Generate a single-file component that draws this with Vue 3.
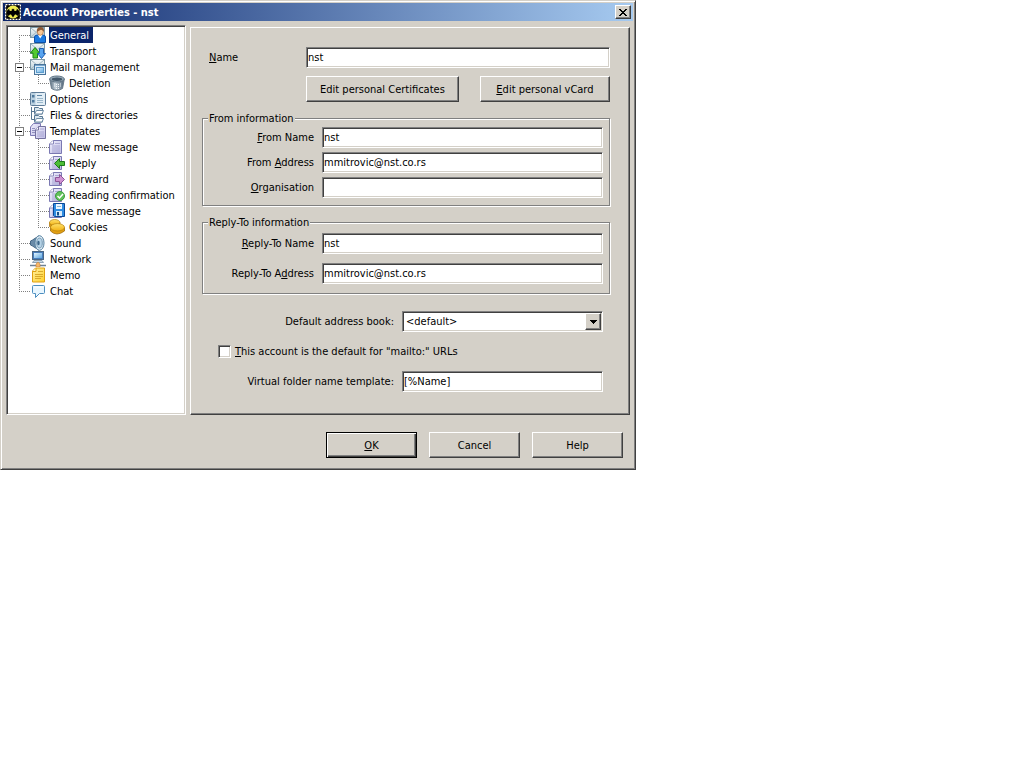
<script setup>
import { ref } from 'vue'

const rows = [
  { label: 'General', icon: 'general', level: 1, first: true },
  { label: 'Transport', icon: 'transport', level: 1 },
  { label: 'Mail management', icon: 'mail', level: 1, open: true },
  { label: 'Deletion', icon: 'bin', level: 2, last: true },
  { label: 'Options', icon: 'options', level: 1 },
  { label: 'Files & directories', icon: 'files', level: 1 },
  { label: 'Templates', icon: 'templates', level: 1, open: true },
  { label: 'New message', icon: 'new', level: 2 },
  { label: 'Reply', icon: 'reply', level: 2 },
  { label: 'Forward', icon: 'forward', level: 2 },
  { label: 'Reading confirmation', icon: 'confirm', level: 2 },
  { label: 'Save message', icon: 'save', level: 2 },
  { label: 'Cookies', icon: 'cookies', level: 2, last: true },
  { label: 'Sound', icon: 'sound', level: 1 },
  { label: 'Network', icon: 'network', level: 1 },
  { label: 'Memo', icon: 'memo', level: 1 },
  { label: 'Chat', icon: 'chat', level: 1, last: true },
]
const selected = ref('General')
const name = ref('nst')
const fromName = ref('nst')
const fromAddress = ref('mmitrovic@nst.co.rs')
const organisation = ref('')
const replyName = ref('nst')
const replyAddress = ref('mmitrovic@nst.co.rs')
const book = ref('default')
const isDefault = ref(false)
const template = ref('[%Name]')
</script>

<template>
  <div class="dialog" role="dialog" aria-labelledby="dlg-title">
    <svg class="defs" width="0" height="0" aria-hidden="true">
      <defs>
        <linearGradient id="blue" x1="0" y1="0" x2="1" y2="1"><stop offset="0" stop-color="#e4f5ff" /><stop offset="1" stop-color="#5fa8e0" /></linearGradient>
        <linearGradient id="paper" x1="0" y1="0" x2="0" y2="1"><stop offset="0" stop-color="#f4f9fa" /><stop offset="1" stop-color="#bcd0d8" /></linearGradient>
        <linearGradient id="lilac" x1="0" y1="0" x2="1" y2="1"><stop offset="0" stop-color="#f2f1fd" /><stop offset="1" stop-color="#bfbce6" /></linearGradient>
        <linearGradient id="steel" x1="0" y1="0" x2="1" y2="0"><stop offset="0" stop-color="#566b7d" /><stop offset=".4" stop-color="#c3d0d9" /><stop offset="1" stop-color="#4b6074" /></linearGradient>
        <linearGradient id="gold" x1="0" y1="0" x2="0" y2="1"><stop offset="0" stop-color="#ffe26a" /><stop offset="1" stop-color="#f2b112" /></linearGradient>
        <linearGradient id="note" x1="0" y1="0" x2="1" y2="1"><stop offset="0" stop-color="#fff0a0" /><stop offset="1" stop-color="#ffd02c" /></linearGradient>
        <symbol id="envelope" viewBox="0 0 16 16">
          <rect x=".5" y=".5" width="14" height="10" fill="url(#paper)" stroke="#7d99a7" />
          <path d="M1 1l6.500 5.500L14 1M1 10l5-4.500M14 10L9 5.500" fill="none" stroke="#9fb6c1" />
        </symbol>
        <symbol id="page" viewBox="0 0 16 16">
          <path d="M4 1.500h8.500v13h-12V5z" fill="url(#lilac)" stroke="#7a78b2" />
          <path d="M4.500 1.500v3.500h-4" fill="#fff" stroke="#8a88bc" />
          <path d="M6 4.500h5M3 7h8M3 9h8M3 11h8M3 13h8" stroke="#9f9dcb" stroke-width=".8" />
        </symbol>
        <symbol id="general" viewBox="0 0 16 16">
          <use href="#envelope" />
          <path d="M4.500 15.500V10q0-2 3-2h5q3 0 3 2v5.500z" fill="#1b7ae2" stroke="#0d4ea6" />
          <path d="M8 8l2.200 3.500L12.500 8z" fill="#fff" />
          <ellipse cx="10.300" cy="4.700" rx="3" ry="3.600" fill="#f9c896" stroke="#a8703f" stroke-width=".7" />
          <path d="M6.800 5Q6.500 0 10.500 0t3.500 5q-1-2-3-2.200Q9 3.500 6.800 5z" fill="#8c5a38" />
        </symbol>
        <symbol id="transport" viewBox="0 0 16 16">
          <use href="#envelope" />
          <path d="M5 4.500l4.500 5.500H7.500v5h-4.500v-5H.5z" fill="#52c932" stroke="#1b8512" />
          <path d="M11.500 15.500L7.500 10.500h2v-5h4v5h2z" fill="#58a4f0" stroke="#1f60b4" />
        </symbol>
        <symbol id="mail" viewBox="0 0 16 16">
          <use href="#envelope" />
          <rect x="4.500" y="5.500" width="11" height="10" fill="#d9edfb" stroke="#4a749a" />
          <path d="M5 6.500h10" stroke="#79a7cd" />
          <rect x="6.500" y="8.500" width="7" height="5" fill="url(#blue)" stroke="#5d9ccc" />
        </symbol>
        <symbol id="bin" viewBox="0 0 16 16">
          <path d="M.7 4L2.500 13.500q5.500 3.500 11 0L15.300 4z" fill="url(#steel)" stroke="#697b8a" />
          <ellipse cx="8" cy="4" rx="7.300" ry="3" fill="#9aacb9" stroke="#5f7485" />
          <ellipse cx="8" cy="4.200" rx="5.300" ry="1.700" fill="#43586a" />
          <path d="M5 9h1M7 9.500h1M9 9.500h1M11 9h1M5 11h1M7 11.500h1M9 11.500h1M11 11h1M7 13.500h1M9 13.500h1" stroke="#f3f7f9" />
        </symbol>
        <symbol id="options" viewBox="0 0 16 16">
          <rect x=".5" y="1.500" width="15" height="13" rx="1" fill="#e1edf5" stroke="#5e7c98" />
          <path d="M1 2h4.500v12H1z" fill="#b8cfdf" />
          <rect x="2" y="4" width="2.500" height="2.500" fill="#4d789c" /><rect x="2" y="9" width="2.500" height="2.500" fill="#4d789c" />
          <path d="M7 4.500h5" stroke="#5f86a6" /><path d="M7 7.500h6M7 9.500h6M7 11.500h6" stroke="#9bb8cc" />
        </symbol>
        <symbol id="files" viewBox="0 0 16 16">
          <path d="M1.500 0v12.500h3M1.500 4.500h3" fill="none" stroke="#577792" />
          <path d="M4.500.5h4l1 1h3v5.500h-8zM4.500 8.500h4l1 1h3v5.500h-8z" fill="#dce8f0" stroke="#577792" />
          <path d="M4.500 7l2-3.500h7L12 7zM4.500 15l2-3.500h7L12 15z" fill="#fff" stroke="#6d8ba4" />
        </symbol>
        <symbol id="templates" viewBox="0 0 16 16">
          <path d="M3.500.5h7v12H.5V4z" fill="url(#lilac)" stroke="#7c79b4" />
          <path d="M2 5.500h3M2 7.500h3M2 9.500h3" stroke="#9290be" />
          <path d="M8.500 3.500h7v12h-10V7z" fill="url(#lilac)" stroke="#75729f" />
          <path d="M8.500 3.500V7h-3" fill="#fff" stroke="#75729f" />
          <path d="M10 6h4M7 9h7M7 11h7M7 13h7" stroke="#9c9ac9" stroke-width=".8" />
        </symbol>
        <symbol id="new" viewBox="0 0 16 16"><use href="#page" /></symbol>
        <symbol id="reply" viewBox="0 0 16 16"><use href="#page" /><path d="M5.500 8.500l5-5V6.500h5v4h-5v3z" fill="#4dbd38" stroke="#1c7a1a" /></symbol>
        <symbol id="forward" viewBox="0 0 16 16"><use href="#page" /><path d="M15.500 8.500l-5-5V6.500h-4v4h4v3z" fill="#cf92d2" stroke="#8d5698" /></symbol>
        <symbol id="confirm" viewBox="0 0 16 16"><use href="#page" /><circle cx="11" cy="9" r="4.500" fill="#62c25a" stroke="#3c9a40" /><path d="M8.500 9l2 2L14 7" fill="none" stroke="#fff" stroke-width="1.500" /></symbol>
        <symbol id="save" viewBox="0 0 16 16"><use href="#page" /><path d="M4.500.5h11v13H5.500l-1-1z" fill="#2f8de2" stroke="#0b4796" /><path d="M7 1h6v5H7z" fill="#eef7ff" /><path d="M7 8h6v5H7z" fill="#d8eaf8" /><path d="M8 9h2v3.500H8z" fill="#174e88" /><path d="M8 3.500h4" stroke="#8bb6d5" /></symbol>
        <symbol id="cookies" viewBox="0 0 16 16">
          <path d="M.5 3.500v4q2 3 6 2l4.500-3v-3z" fill="#d99a10" stroke="#a87010" stroke-width=".7" /><ellipse cx="5.700" cy="3.500" rx="5.200" ry="3" fill="url(#gold)" stroke="#b5800f" stroke-width=".7" />
          <path d="M1.500 8.500v3.500q6 6 14 0V8.500z" fill="#e3a011" stroke="#a06c0c" stroke-width=".8" /><ellipse cx="8.500" cy="8.300" rx="7" ry="3.700" fill="url(#gold)" stroke="#b5800f" stroke-width=".7" />
        </symbol>
        <symbol id="sound" viewBox="0 0 16 16">
          <path d="M.5 6l2-1L9 .8v14.400L2.500 11l-2-1z" fill="#6a8ba8" stroke="#466886" />
          <ellipse cx="9.500" cy="8" rx="4.500" ry="7.300" fill="#e6f2fa" stroke="#55809f" /><ellipse cx="9.500" cy="8" rx="2.800" ry="5" fill="#b5d2e6" stroke="#7599b4" /><ellipse cx="8.500" cy="8" rx="1.200" ry="2.300" fill="#3c6689" />
        </symbol>
        <symbol id="network" viewBox="0 0 16 16">
          <rect x="2.500" y=".5" width="11" height="8" fill="#4a7fbe" stroke="#4b6784" /><rect x="4" y="2" width="8" height="5" fill="url(#blue)" />
          <path d="M4 9.500h8l1.500 2h-11z" fill="#c9d7e2" stroke="#7890a6" stroke-width=".8" /><path d="M0 14.500h16" stroke="#6d8195" stroke-width="1.500" /><path d="M8 11l2 2v3H6v-3z" fill="#f5b76c" stroke="#c98238" stroke-width=".6" />
        </symbol>
        <symbol id="memo" viewBox="0 0 16 16"><path d="M5.500 1h9v14h-12V4z" fill="url(#note)" stroke="#dfa010" /><path d="M6 1v3.500H2.500" fill="#fff8cc" stroke="#dfa010" /><path d="M8 4.500h5M5 7.500h8M5 9.500h8M5 11.500h6" stroke="#d9aa2c" /></symbol>
        <symbol id="chat" viewBox="0 0 16 16"><path d="M3.500 2.500h10q1 0 1 1v6q0 1-1 1H9.500l-4 4v-4h-2q-1 0-1-1v-6q0-1 1-1z" fill="#e8f6ff" stroke="#4c8ec0" /><path d="M4 4h9.500" stroke="#fff" /></symbol>
      </defs>
    </svg>

    <header class="titlebar">
      <svg class="app-icon" viewBox="0 0 16 16" aria-hidden="true">
        <rect width="16" height="16" fill="#000" /><rect x=".5" y=".5" width="15" height="15" fill="none" stroke="#fff" stroke-width="1.400" stroke-dasharray="2 1" />
        <ellipse cx="8" cy="8" rx="6.500" ry="6.500" fill="#f0ec50" />
        <path d="M4.500 4.500Q2 5.500 1.500 8T4 12q0-2 2-1.500l2 3 2-3q2-.5 2 1.500 3-1.500 2.500-4t-3-3.500q1 2-1.500 2.500L9.500 7 9 4.500l-1 1-1-1L6.500 7 6 7Q3.500 6.500 4.500 4.500z" fill="#000" />
      </svg>
      <h1 id="dlg-title">Account Properties - nst</h1>
      <button class="close" type="button" aria-label="Close">
        <svg viewBox="0 0 8 7" width="8" height="7" shape-rendering="crispEdges" aria-hidden="true"><path d="M0 0h2v1h1v1h2V1h1V0h2v1H7v1H6v1H5v1h1v1h1v1h1v1H6V6H5V5H3v1H2v1H0V6h1V5h1V4h1V3H2V2H1V1H0z" /></svg>
      </button>
    </header>

    <form @submit.prevent>
      <div class="body">
        <ul class="tree" role="tree" aria-label="Account settings">
          <li v-for="row in rows" :key="row.label" role="treeitem" :aria-selected="selected === row.label" :class="['row', { first: row.first, last: row.last, child: row.level === 2 }]" @click="selected = row.label">
            <span class="guide root"><span v-if="row.open" class="expander"></span></span>
            <span v-if="row.level === 2" class="guide branch"></span>
            <svg class="icon" aria-hidden="true"><use :href="'#' + row.icon" /></svg>
            <span :class="['label', { selected: selected === row.label }]">{{ row.label }}</span>
          </li>
        </ul>

        <section class="panel">
          <div class="field name">
            <label for="name"><u>N</u>ame</label>
            <input id="name" v-model="name" type="text" />
          </div>
          <div class="actions">
            <button type="button" class="push certs">Edit personal Certificates</button>
            <button type="button" class="push vcard"><u>E</u>dit personal vCard</button>
          </div>

          <fieldset>
            <legend>From information</legend>
            <div class="field"><label for="fn"><u>F</u>rom Name</label><input id="fn" v-model="fromName" type="text" /></div>
            <div class="field"><label for="fa">From <u>A</u>ddress</label><input id="fa" v-model="fromAddress" type="text" /></div>
            <div class="field"><label for="org"><u>O</u>rganisation</label><input id="org" v-model="organisation" type="text" /></div>
          </fieldset>

          <fieldset class="reply">
            <legend>Reply-To information</legend>
            <div class="field"><label for="rn"><u>R</u>eply-To Name</label><input id="rn" v-model="replyName" type="text" /></div>
            <div class="field"><label for="ra">Reply-To A<u>d</u>dress</label><input id="ra" v-model="replyAddress" type="text" /></div>
          </fieldset>

          <div class="field wide book">
            <label for="book">Default address book:</label>
            <div class="combo">
              <select id="book" v-model="book"><option value="default">&lt;default&gt;</option></select>
              <span class="drop" aria-hidden="true"><svg viewBox="0 0 7 4" width="7" height="4" shape-rendering="crispEdges"><path d="M0 0h7v1H6v1H5v1H4v1H3V3H2V2H1V1H0z" /></svg></span>
            </div>
          </div>
          <div class="check">
            <input id="mailto" v-model="isDefault" type="checkbox" />
            <label for="mailto"><u>T</u>his account is the default for "mailto:" URLs</label>
          </div>
          <div class="field wide">
            <label for="tpl">Virtual folder name template:</label>
            <input id="tpl" v-model="template" type="text" />
          </div>
        </section>
      </div>

      <footer class="footer">
        <button type="submit" class="push default"><u>O</u>K</button>
        <button type="button" class="push">Cancel</button>
        <button type="button" class="push">Help</button>
      </footer>
    </form>
  </div>
</template>

<style>
body { background: #fff; }
</style>

<style scoped>
.dialog, .dialog * { box-sizing: border-box; }
.dialog {
  width: 100%;
  max-width: 636px;
  padding: 2px;
  border: 1px solid;
  border-color: #d4d0c8 #404040 #404040 #d4d0c8;
  box-shadow: inset 1px 1px #fff, inset -1px -1px #808080;
  background: #d4d0c8;
  color: #000;
  font: 11px/13px Tahoma, "DejaVu Sans Condensed", "DejaVu Sans", sans-serif;
  white-space: nowrap;
}
.defs { position: absolute; }
input, select, button { margin: 0; font: inherit; color: inherit; border-radius: 0; }
u { text-underline-offset: 1px; text-decoration-thickness: 1px; }

.titlebar {
  display: flex;
  align-items: center;
  height: 18px;
  padding: 0 2px;
  background: linear-gradient(to right, #0a246a, #a6caf0);
}
.app-icon { width: 16px; height: 16px; }
.titlebar h1 { flex: 1; margin: 0 0 0 2px; font-size: 11px; line-height: 13px; font-weight: bold; color: #fff; }
.close {
  display: flex;
  align-items: center;
  justify-content: center;
  width: 16px;
  height: 14px;
  padding: 0;
  border: 1px solid;
  border-color: #fff #404040 #404040 #fff;
  box-shadow: inset -1px -1px #808080;
  background: #d4d0c8;
}

.body { display: flex; gap: 4px; padding: 4px 3px 0; }
.tree {
  flex: 0 0 180px;
  margin: 0;
  padding: 1px;
  list-style: none;
  background: #fff;
  border: 1px solid;
  border-color: #808080 #fff #fff #808080;
  box-shadow: inset 1px 1px #404040, inset -1px -1px #d4d0c8;
}
.row { display: flex; height: 16px; cursor: default; }
.guide {
  --v: repeating-linear-gradient(to bottom, #808080 0 1px, transparent 1px 2px);
  --h: repeating-linear-gradient(to right, #808080 0 1px, transparent 1px 2px);
  display: flex;
  align-items: center;
  flex: none;
  background-repeat: no-repeat;
}
.root { width: 22px; background-image: var(--v), var(--h); background-position: 11px 0, 11px 8px; background-size: 1px 16px, 11px 1px; }
.first .root { background-position: 11px 8px, 11px 8px; }
.last .root { background-size: 1px 9px, 11px 1px; }
.child .root { background-size: 1px 16px, 0 0; }
.branch { width: 19px; background-image: var(--v), var(--h); background-position: 8px 0, 8px 8px; background-size: 1px 16px, 11px 1px; }
.last .branch { background-size: 1px 9px, 11px 1px; }
.expander {
  width: 9px;
  height: 9px;
  margin-left: 7px;
  border: 1px solid #808080;
  background: linear-gradient(#000, #000) center / 5px 1px no-repeat #fff;
}
.icon { flex: none; width: 16px; height: 16px; }
.label { margin-left: 3px; padding: 0 2px 0 1px; line-height: 18px; }
.child .label { padding-left: 2px; }
.child .label { margin-left: 2px; }
.label.selected { background: #0a246a; color: #fff; padding-right: 4px; }

.panel {
  flex: 1;
  min-width: 0;
  margin-top: 2px;
  padding: 19px 19px 22px 11px;
  border: 1px solid;
  border-color: #fff #404040 #404040 #fff;
  box-shadow: inset -1px -1px #808080;
}
.field { display: flex; align-items: center; gap: 8px; }
.field label { flex: 0 0 111px; text-align: right; }
.field.name { gap: 0; }
.field.name label { flex-basis: 104px; padding-left: 7px; text-align: left; }
input[type="text"], .combo {
  flex: 1;
  min-width: 0;
  height: 21px;
  border: 1px solid;
  border-color: #808080 #fff #fff #808080;
  box-shadow: inset 1px 1px #404040, inset -1px -1px #d4d0c8;
  background: #fff;
  outline: none;
}
input[type="text"] { padding: 0 1px 1px 1px; }
.actions { display: flex; gap: 21px; margin: 8px 0 10px; padding-left: 104px; }
.push {
  height: 26px;
  padding: 0;
  border: 1px solid;
  border-color: #fff #404040 #404040 #fff;
  box-shadow: inset -1px -1px #808080;
  background: #d4d0c8;
}
.certs { flex: 153 1 0; }
.vcard { flex: 130 1 0; }

fieldset {
  display: flex;
  flex-direction: column;
  gap: 4px;
  min-width: 0;
  margin: 0 0 10px;
  padding: 2px 6px 7px 0;
  border: 1px solid #808080;
  box-shadow: 1px 1px #fff, inset 1px 1px #fff;
}
fieldset.reply { gap: 9px; margin-bottom: 17px; padding-top: 4px; padding-bottom: 9px; }
legend { margin-left: 5px; padding: 0 1px; background: #d4d0c8; }

.wide { padding-right: 7px; }
.wide label { flex-basis: 192px; }
.combo { display: flex; padding: 1px; }
.combo select { flex: 1; min-width: 0; padding: 0 0 0 2px; border: 0; outline: none; background: transparent; appearance: none; }
.drop {
  display: flex;
  align-items: center;
  justify-content: center;
  width: 16px;
  border: 1px solid;
  border-color: #fff #404040 #404040 #fff;
  box-shadow: inset -1px -1px #808080;
  background: #d4d0c8;
  pointer-events: none;
}
.check { display: flex; align-items: center; gap: 4px; height: 15px; margin: 12px 0; padding-left: 16px; }
.check input {
  appearance: none;
  width: 13px;
  height: 13px;
  border: 1px solid;
  border-color: #808080 #fff #fff #808080;
  box-shadow: inset 1px 1px #404040, inset -1px -1px #d4d0c8;
  background: #fff;
}
.check input:checked { background: linear-gradient(#000, #000) center / 5px 5px no-repeat #fff; }

.footer { display: flex; justify-content: flex-end; gap: 12px; padding: 17px 10px 9px; }
.footer .push { flex: 0 1 91px; }
.push.default { border-color: #000; box-shadow: inset 1px 1px #fff, inset -1px -1px #404040, inset -2px -2px #808080; }
</style>
